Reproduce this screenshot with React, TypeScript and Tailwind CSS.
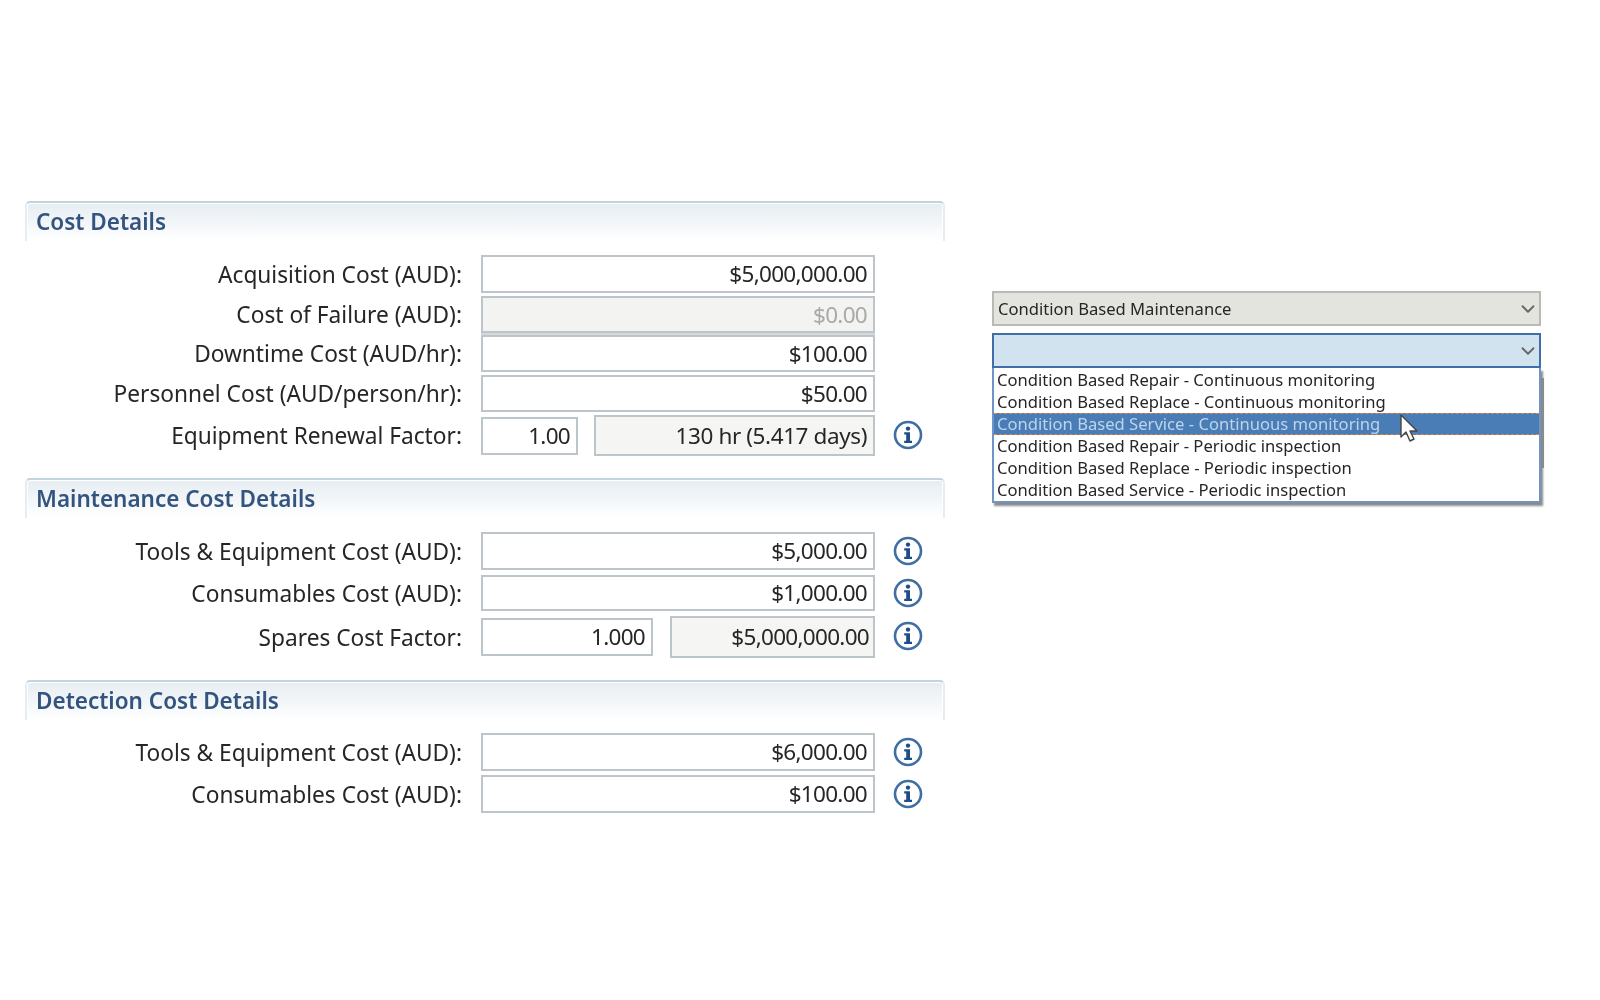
import type { ReactNode } from "react";
import { ChevronDown } from "lucide-react";

function InfoIcon() {
  return (
    <svg viewBox="0 0 30 30" className="h-[30px] w-[30px] shrink-0">
      <circle cx="15" cy="15" r="13" fill="#fff" stroke="#3f6ea3" strokeWidth="2.6" />
      <circle cx="15" cy="8.6" r="2.2" fill="#1f4c8a" />
      <path d="M11.2 12.2h5.8v8.6h2v2.2h-7.8v-2.2h2v-6.4h-2z" fill="#1f4c8a" />
    </svg>
  );
}

function Header({ title }: { title: string }) {
  return (
    <div className="h-[40px] rounded-t-[5px] border-t-2 border-x-2 border-t-[#c3d4e1] border-x-[#e6edf2] bg-gradient-to-b from-[#e6edf2] to-white pl-[9px] pt-[4px] text-[22.5px] leading-[30px] font-semibold text-[#33547f] shadow-[inset_1px_1px_0_#ffffff,inset_-1px_0_0_#ffffff]">
      {title}
    </div>
  );
}

function Box({
  value,
  className,
}: {
  value: string;
  className: string;
}) {
  return (
    <div
      className={
        "flex items-center justify-end border-2 border-[#bcc5ca] pr-[6px] text-[22.5px] tracking-[-0.7px] text-[#262626] " +
        className
      }
    >
      {value}
    </div>
  );
}

function Row({
  label,
  children,
  className,
  info,
  lift,
}: {
  label: string;
  children: ReactNode;
  className: string;
  info?: boolean;
  lift?: boolean;
}) {
  return (
    <div className={"flex items-center " + className}>
      <div className="w-[437px] pt-[2px] text-right text-[22.7px] text-[#262626]">{label}:</div>
      <div className="ml-[19px] flex h-full w-[394px] items-center justify-between">{children}</div>
      {info && (
        <div className={lift ? "ml-[18px] -translate-y-px" : "ml-[18px]"}>
          <InfoIcon />
        </div>
      )}
    </div>
  );
}

const options = [
  "Condition Based Repair - Continuous monitoring",
  "Condition Based Replace - Continuous monitoring",
  "Condition Based Service - Continuous monitoring",
  "Condition Based Repair - Periodic inspection",
  "Condition Based Replace - Periodic inspection",
  "Condition Based Service - Periodic inspection",
];

export default function App() {
  return (
    <div className="flex min-h-[1000px] bg-white pt-[201px] font-['Noto_Sans',sans-serif] blur-[0.7px]">
      <div className="ml-[25px] w-[920px]">
        <Header title="Cost Details" />
        <Row label="Acquisition Cost (AUD)" className="mt-[14px] h-[38px]">
          <Box value="$5,000,000.00" className="h-full w-full bg-white" />
        </Row>
        <Row label="Cost of Failure (AUD)" className="mt-[3px] h-[37px]">
          <Box value="$0.00" className="h-full w-full bg-[#f3f3f2] !text-[#a9a9a9] shadow-[0_3px_0_#d6d8d9]" />
        </Row>
        <Row label="Downtime Cost (AUD/hr)" className="mt-[2px] h-[37px]">
          <Box value="$100.00" className="h-full w-full bg-white" />
        </Row>
        <Row label="Personnel Cost (AUD/person/hr)" className="mt-[3px] h-[37px]">
          <Box value="$50.00" className="h-full w-full bg-white" />
        </Row>
        <Row label="Equipment Renewal Factor" className="mt-[3px] h-[41px]" info lift>
          <Box value="1.00" className="h-[38px] w-[97px] bg-white" />
          <Box value="130 hr (5.417 days)" className="h-full w-[281px] bg-[#f5f5f4] !tracking-[-0.4px]" />
        </Row>

        <div className="mt-[22px]">
          <Header title="Maintenance Cost Details" />
        </div>
        <Row label="Tools & Equipment Cost (AUD)" className="mt-[14px] h-[38px]" info>
          <Box value="$5,000.00" className="h-full w-full bg-white" />
        </Row>
        <Row label="Consumables Cost (AUD)" className="mt-[5px] h-[36px]" info>
          <Box value="$1,000.00" className="h-full w-full bg-white" />
        </Row>
        <Row label="Spares Cost Factor" className="mt-[5px] h-[42px]" info lift>
          <Box value="1.000" className="h-[38px] w-[172px] bg-white" />
          <Box value="$5,000,000.00" className="h-full w-[205px] bg-[#f5f5f4] !pr-[4px]" />
        </Row>

        <div className="mt-[22px]">
          <Header title="Detection Cost Details" />
        </div>
        <Row label="Tools & Equipment Cost (AUD)" className="mt-[13px] h-[38px]" info>
          <Box value="$6,000.00" className="h-full w-full bg-white" />
        </Row>
        <Row label="Consumables Cost (AUD)" className="mt-[4px] h-[38px]" info>
          <Box value="$100.00" className="h-full w-full bg-white" />
        </Row>
      </div>

      <div className="ml-[47px] mt-[90px] w-[549px]">
        <div className="flex h-[35px] items-center justify-between border-2 border-[#b9b9b5] bg-[#e4e4df] pl-[4px] pt-[1px] text-[16.6px] text-[#262626]">
          <span>Condition Based Maintenance</span>
          <ChevronDown className="h-[22px] w-[22px] text-[#666]" />
        </div>
        <div className="mt-[7px] flex h-[35px] items-center justify-end border-2 border-[#3f6ea8] bg-[#d0e3ef]">
          <ChevronDown className="h-[22px] w-[22px] text-[#666]" />
        </div>
        <div className="relative border-2 border-t-0 border-[#6f95c6] bg-white pt-[1px] shadow-[2px_3px_2px_#8a8a8a]">
          {options.map((o, i) => (
            <div
              key={o}
              className={
                i === 2
                  ? "h-[22px] border-y border-dashed border-[#e0843f] bg-[#4a7cb6] pl-[3px] text-[16.6px] leading-[20px] text-[#bcd4ea]"
                  : "h-[22px] pl-[3px] text-[16.6px] leading-[21px] text-[#262626]"
              }
            >
              {o}
            </div>
          ))}
          <svg viewBox="0 0 20 30" className="absolute left-[405px] top-[46px] h-[30px] w-[20px]">
            <path
              d="M2 1v22l5-5 4 9 4-2-4-8h7z"
              fill="#fff"
              stroke="#444"
              strokeWidth="1.4"
              strokeLinejoin="round"
            />
          </svg>
          <div className="absolute -right-[5px] top-[10px] h-[90px] w-[3px] bg-[#8a8a8a]" />
        </div>
      </div>
    </div>
  );
}
